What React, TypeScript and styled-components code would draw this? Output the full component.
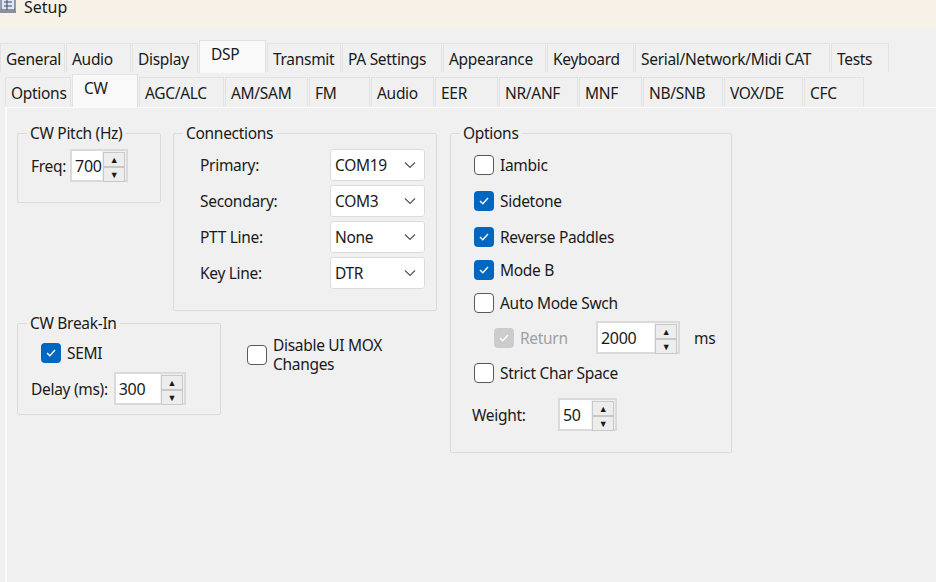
import React from "react";
import styled, { createGlobalStyle } from "styled-components";

const G = createGlobalStyle`
  body { margin:0; background:#f0f0f0; font-family:"Noto Sans","Open Sans",sans-serif; color:#1a1a1a; }
  * { box-sizing:border-box; }
`;
const Win = styled.div`width:936px;height:582px;overflow:hidden;background:#f0f0f0;display:flex;flex-direction:column;`;
const Title = styled.div`height:28px;background:#f8f1e7;display:flex;align-items:flex-start;gap:4px;font-size:16px;line-height:14px;overflow:hidden;`;
const TabRow = styled.div<{ $top: number; $left?: number }>`display:flex;margin-top:${p => p.$top}px;padding-left:${p => p.$left ?? 0}px;height:32px;align-items:flex-end;`;
const Tab = styled.div<{ $w: number; $sel?: boolean }>`
  width:${p => p.$w}px;height:${p => p.$sel ? 33 : 29}px;margin-right:1px;
  background:${p => p.$sel ? "#f9f9f9" : "#f0f0f0"};border:1px solid #e2e2e2;border-bottom:none;
  font-size:15.5px;padding:${p => p.$sel ? "2px 0 0 11px" : "4px 0 0 5px"};white-space:nowrap;letter-spacing:-0.3px;
  ${p => p.$sel ? "margin-bottom:-1px;position:relative;z-index:1;" : ""}
`;
const Page = styled.div`flex:1;margin:1px 0 0 5px;border-left:2px solid #fafafa;border-top:1px solid #fafafa;display:flex;padding:14px 0 0 10px;gap:13px;align-items:flex-start;`;
const Col = styled.div`display:flex;flex-direction:column;`;
const Row = styled.div<{ $gap: number; $mt?: number }>`display:flex;gap:${p => p.$gap}px;align-items:flex-start;margin-top:${p => p.$mt ?? 0}px;`;
const Group = styled.fieldset<{ $w: number; $h: number }>`
  width:${p => p.$w}px;height:${p => p.$h}px;margin:0;border:1px solid #dcdcdc;border-radius:2px;padding:0 0 0 13px;position:relative;
  legend{font-size:15.5px;padding:0 3px;margin-left:-4px;letter-spacing:-0.3px;}
`;
const Line = styled.div<{ $mt: number; $gap?: number; $ml?: number }>`display:flex;align-items:center;gap:${p => p.$gap ?? 6}px;margin-top:${p => p.$mt}px;margin-left:${p => p.$ml ?? 0}px;font-size:15.5px;letter-spacing:-0.3px;`;
const Lbl = styled.span<{ $w?: number; $dim?: boolean }>`width:${p => p.$w ? p.$w + "px" : "auto"};color:${p => p.$dim ? "#a0a0a0" : "inherit"};`;
const Two = styled.span`display:block;line-height:19px;`;
const SpinBox = styled.div<{ $w: number }>`width:${p => p.$w}px;height:33px;background:#fff;border:2px solid #dadada;display:flex;justify-content:space-between;padding-left:3px;font-size:16px;align-items:center;`;
const Arrows = styled.div`width:24px;height:29px;display:flex;flex-direction:column;background:#f0f0f0;padding:1px;
  span{flex:1;display:flex;align-items:center;justify-content:center;font-size:9px;border:1px solid #c8c8c8;background:#ededed;}`;
const Combo = styled.div`width:95px;height:32px;background:#fff;border:1px solid #dcdcdc;border-radius:3px;display:flex;align-items:center;justify-content:space-between;padding:0 8px 0 4px;font-size:15.5px;`;
const Box = styled.span<{ $on?: boolean; $dim?: boolean }>`width:20px;height:20px;border-radius:4px;flex:none;display:inline-flex;align-items:center;justify-content:center;
  border:${p => p.$on ? "none" : "1.5px solid #5a5a5a"};background:${p => p.$dim ? "#cccccc" : p.$on ? "#0067c0" : "#fff"};`;

const Spin = ({ v, w }: { v: string; w: number }) => (
  <SpinBox $w={w}><span>{v}</span><Arrows><span>▲</span><span>▼</span></Arrows></SpinBox>
);
const Chev = () => (<svg width="12" height="8" viewBox="0 0 12 8"><path d="M1 1.5 6 6.5 11 1.5" fill="none" stroke="#555" strokeWidth="1.2" /></svg>);
const Check = ({ on, dim }: { on?: boolean; dim?: boolean }) => (
  <Box $on={on || dim} $dim={dim}>{(on || dim) && <svg width="12" height="10" viewBox="0 0 12 10"><path d="M2 5 4.8 7.8 10 2" fill="none" stroke="#fff" strokeWidth="1.4" /></svg>}</Box>
);

const top: [string, number][] = [["General", 65], ["Audio", 65], ["Display", 66], ["DSP", 67], ["Transmit", 74], ["PA Settings", 100], ["Appearance", 103], ["Keyboard", 87], ["Serial/Network/Midi CAT", 195], ["Tests", 58]];
const sub: [string, number][] = [["Options", 66], ["CW", 66], ["AGC/ALC", 85], ["AM/SAM", 83], ["FM", 61], ["Audio", 63], ["EER", 63], ["NR/ANF", 79], ["MNF", 63], ["NB/SNB", 80], ["VOX/DE", 79], ["CFC", 60]];

export default function App() {
  return (
    <Win>
      <G />
      <Title>
        <svg width="20" height="16" viewBox="0 4 20 16"><rect x="1" y="2" width="14" height="12" fill="#dfe6f0" stroke="#3a4a70" /><path d="M4 6h8M4 10h8M7 3v11" stroke="#3a4a70" /><rect x="0" y="14" width="16" height="3" fill="#8a8f99" /></svg>
        <span>Setup</span>
      </Title>
      <TabRow $top={12}>{top.map(([t, w]) => <Tab key={t} $w={w} $sel={t === "DSP"}>{t}</Tab>)}</TabRow>
      <TabRow $top={2} $left={5}>{sub.map(([t, w]) => <Tab key={t} $w={w} $sel={t === "CW"}>{t}</Tab>)}</TabRow>
      <Page>
        <Col>
          <Row $gap={12}>
            <Group $w={144} $h={81}>
              <legend>CW Pitch (Hz)</legend>
              <Line $mt={5} $gap={4}><Lbl>Freq:</Lbl><Spin v="700" w={58} /></Line>
            </Group>
            <Group $w={264} $h={189}>
              <legend>Connections</legend>
              {[["Primary:", "COM19"], ["Secondary:", "COM3"], ["PTT Line:", "None"], ["Key Line:", "DTR"]].map(([l, v], i) => (
                <Line key={l} $mt={i ? 4 : 5} $ml={13} $gap={0}><Lbl $w={130}>{l}</Lbl><Combo>{v}<Chev /></Combo></Line>
              ))}
            </Group>
          </Row>
          <Row $gap={26} $mt={1}>
            <Group $w={204} $h={103}>
              <legend>CW Break-In</legend>
              <Line $mt={8} $ml={10}><Check on /><span>SEMI</span></Line>
              <Line $mt={8} $gap={6}><Lbl>Delay (ms):</Lbl><Spin v="300" w={72} /></Line>
            </Group>
            <Line $mt={24}><Check /><Two>Disable UI MOX<br />Changes</Two></Line>
          </Row>
        </Col>
        <Group $w={282} $h={331}>
          <legend>Options</legend>
          <Line $mt={10} $ml={10}><Check /><span>Iambic</span></Line>
          <Line $mt={14} $ml={10}><Check on /><span>Sidetone</span></Line>
          <Line $mt={14} $ml={10}><Check on /><span>Reverse Paddles</span></Line>
          <Line $mt={11} $ml={10}><Check on /><span>Mode B</span></Line>
          <Line $mt={11} $ml={10}><Check /><span>Auto Mode Swch</span></Line>
          <Line $mt={7} $ml={30}><Check dim /><Lbl $dim $w={70}>Return</Lbl><Spin v="2000" w={84} /><span style={{ marginLeft: 8 }}>ms</span></Line>
          <Line $mt={8} $ml={10}><Check /><span>Strict Char Space</span></Line>
          <Line $mt={14} $ml={8} $gap={0}><Lbl $w={86}>Weight:</Lbl><Spin v="50" w={59} /></Line>
        </Group>
      </Page>
    </Win>
  );
}
